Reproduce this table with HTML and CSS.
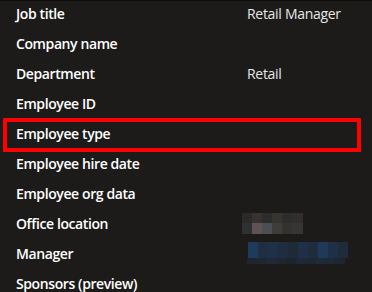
FILE: index.html
```html
<!DOCTYPE html>
<html lang="en">
<head>
<meta charset="utf-8">
<link rel="stylesheet" href="styles.css">
</head>
<body>
<div class="panel">
  <div class="row"><span class="label">Job title</span><span class="value">Retail Manager</span></div>
  <div class="row"><span class="label">Company name</span><span class="value"></span></div>
  <div class="row"><span class="label">Department</span><span class="value">Retail</span></div>
  <div class="row"><span class="label">Employee ID</span><span class="value"></span></div>
  <div class="row row-highlight"><span class="label">Employee type</span><span class="value"></span></div>
  <div class="row"><span class="label">Employee hire date</span><span class="value"></span></div>
  <div class="row"><span class="label">Employee org data</span><span class="value"></span></div>
  <div class="row"><span class="label">Office location</span>
    <span class="value">
      <span class="pix pix-office">
        <i style="background:#2a2a2a"></i><i style="background:#38322f"></i><i style="background:#2d2c2c"></i><i style="background:#383531"></i><i style="background:#2e2d2d"></i><i style="background:#322e2d"></i>
        <i style="background:#2e3133"></i><i style="background:#5c5352"></i><i style="background:#4a4f52"></i><i style="background:#403d39"></i><i style="background:#333231"></i><i style="background:#363434"></i>
      </span>
    </span>
  </div>
  <div class="row"><span class="label">Manager</span>
    <span class="value">
      <span class="pix-manager">
        <span class="pix pix-mgr-top">
          <i style="background:#1f3a5c"></i><i style="background:#1d2f40"></i><i style="background:#1e3148"></i><i style="background:#1e2e40"></i><i style="background:#1e2a38"></i><i style="background:#1f3046"></i><i style="background:#1e2c3e"></i><i style="background:#1f3a58"></i><i style="background:#1e3048"></i><i style="background:#1d2b3b"></i>
        </span>
        <span class="pix pix-mgr-bottom">
          <i style="background:#1f2530"></i><i style="background:#1e2631"></i><i style="background:#1e2a3a"></i><i style="background:#1e2632"></i><i style="background:#1d242e"></i><i style="background:#1e2836"></i><i style="background:#1e2835"></i><i style="background:#1f2b3c"></i><i style="background:#1e2936"></i><i style="background:#1d2530"></i>
        </span>
      </span>
    </span>
  </div>
  <div class="row"><span class="label">Sponsors (preview)</span><span class="value"></span></div>
</div>
</body>
</html>
```
FILE: styles.css
```css
html, body {
  margin: 0;
  padding: 0;
  background: #1c1b1a;
}
body {
  width: 372px;
  height: 292px;
  overflow: hidden;
  font-family: "Segoe UI", "Open Sans", "Noto Sans", sans-serif;
  border-top: 1px solid #0b0b0b;
  box-sizing: border-box;
}
.panel {
  display: flex;
  flex-direction: column;
  margin-top: -3px;
}
.row {
  position: relative;
  display: grid;
  grid-template-columns: 231px 1fr;
  align-items: center;
  height: 30px;
  padding-left: 16px;
}
.label {
  color: #ffffff;
  font-weight: 600;
  font-size: 14px;
  letter-spacing: -0.4px;
  white-space: nowrap;
}
.value {
  color: #e6e6e6;
  font-size: 14px;
  letter-spacing: -0.3px;
  white-space: nowrap;
}
.row-highlight::after {
  content: "";
  position: absolute;
  left: 3px;
  top: 0px;
  width: 358px;
  height: 34px;
  border: 4px solid #ff0000;
  box-sizing: border-box;
}
.pix {
  display: grid;
}
.pix i {
  display: block;
}
.pix-office {
  margin-left: -5px;
  width: 61px;
  grid-template-columns: repeat(5, 10px) 11px;
  grid-template-rows: 10px 11px;
}
.pix-manager {
  display: flex;
  flex-direction: column;
  margin-left: 1px;
}
.pix-mgr-top {
  width: 100px;
  grid-template-columns: repeat(10, 10px);
  grid-template-rows: 16px;
}
.pix-mgr-bottom {
  width: 98px;
  margin-left: -1px;
  grid-template-columns: repeat(10, 1fr);
  grid-template-rows: 6px;
}
```
